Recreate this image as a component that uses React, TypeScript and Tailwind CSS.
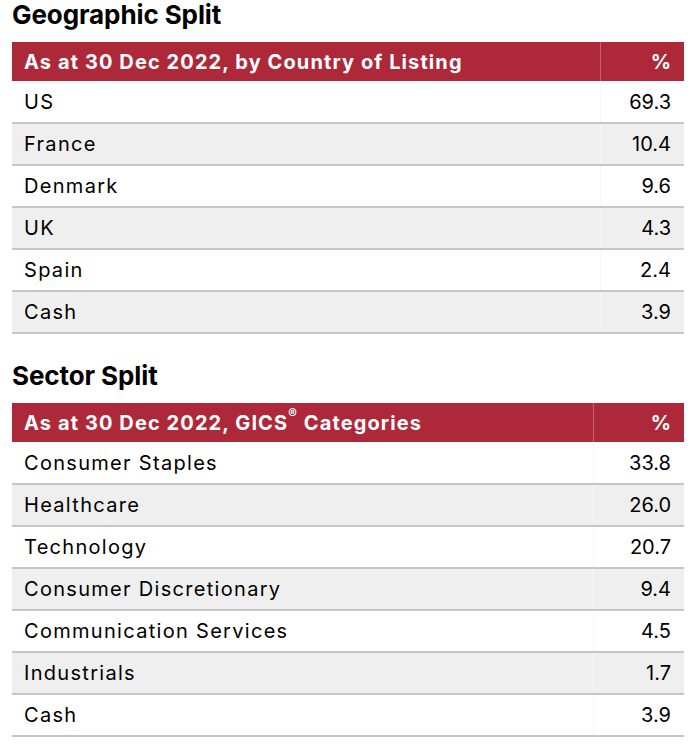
import React from 'react';

type Row = { label: string; value: string };

const geographic: Row[] = [
  { label: 'US', value: '69.3' },
  { label: 'France', value: '10.4' },
  { label: 'Denmark', value: '9.6' },
  { label: 'UK', value: '4.3' },
  { label: 'Spain', value: '2.4' },
  { label: 'Cash', value: '3.9' },
];

const sectors: Row[] = [
  { label: 'Consumer Staples', value: '33.8' },
  { label: 'Healthcare', value: '26.0' },
  { label: 'Technology', value: '20.7' },
  { label: 'Consumer Discretionary', value: '9.4' },
  { label: 'Communication Services', value: '4.5' },
  { label: 'Industrials', value: '1.7' },
  { label: 'Cash', value: '3.9' },
];

const SplitTable: React.FC<{
  title: string;
  caption: React.ReactNode;
  rows: Row[];
  valueWidth: string;
  className?: string;
}> = ({ title, caption, rows, valueWidth, className }) => (
  <section className={className}>
    <h2 className="text-[26px] leading-[30px] font-bold tracking-[-0.1px] text-black mb-[12px]">
      {title}
    </h2>
    <table className="w-full border-collapse">
      <thead>
        <tr className="bg-[#ad2839] text-white h-[39px]">
          <th className="text-left font-bold text-[20px] tracking-[1.1px] pl-[12px] py-0">
            {caption}
          </th>
          <th
            className={`${valueWidth} text-right font-bold text-[20px] pr-[13px] py-0 border-l border-[#c9606c]`}
          >
            %
          </th>
        </tr>
      </thead>
      <tbody>
        {rows.map((row, i) => (
          <tr
            key={row.label}
            className={`h-[42px] border-b-2 border-[#c6c6c6] ${i % 2 === 1 ? 'bg-[#efefef]' : 'bg-white'}`}
          >
            <td className="pl-[12px] text-[20px] tracking-[1.3px] text-black">{row.label}</td>
            <td className="pr-[13px] text-right text-[20px] text-black border-l border-[#f6f6f6]">
              {row.value}
            </td>
          </tr>
        ))}
      </tbody>
    </table>
  </section>
);

export default function App() {
  return (
    <div className="w-[696px] h-[756px] bg-white px-[12px] font-['Inter',sans-serif] overflow-hidden">
      <SplitTable
        title="Geographic Split"
        caption="As at 30 Dec 2022, by Country of Listing"
        rows={geographic}
        valueWidth="w-[84px]"
      />
      <SplitTable
        title="Sector Split"
        caption={<>As at 30 Dec 2022, GICS<sup className="text-[13px] align-[5px]">®</sup> Categories</>}
        rows={sectors}
        valueWidth="w-[91px]"
        className="mt-[27px]"
      />
    </div>
  );
}
